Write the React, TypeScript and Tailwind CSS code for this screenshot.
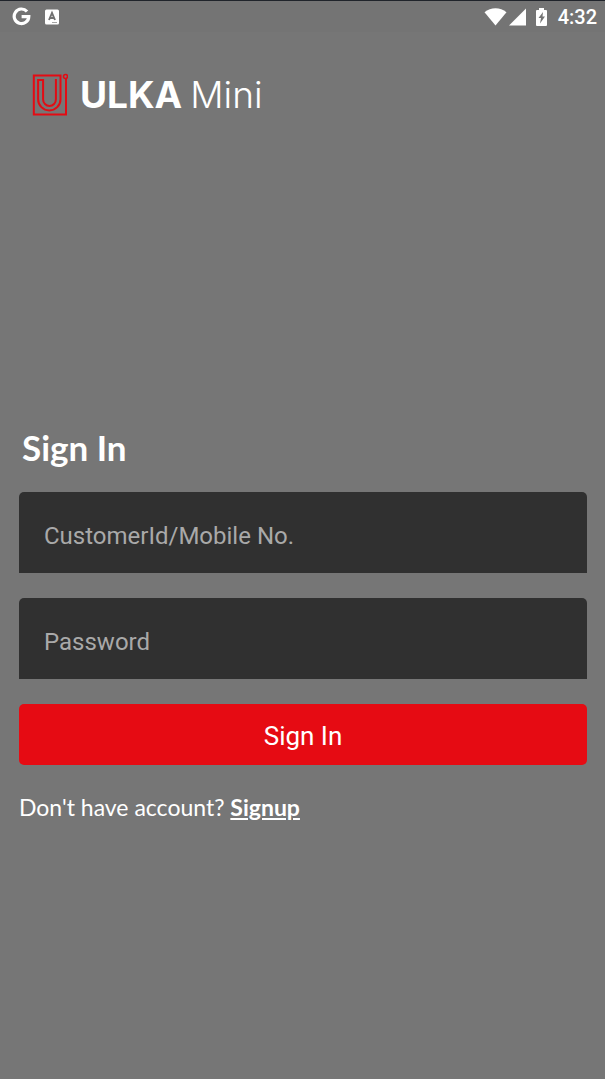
import type { ReactNode } from "react";

function StatusBar() {
  return (
    <div className="flex h-8 items-center justify-between border-t border-[#20242b] bg-[#747474] pr-2 pl-3">
      <div className="flex items-center gap-3">
        <svg aria-hidden="true" className="size-5" viewBox="0 0 20 20" fill="none" stroke="#fff" strokeWidth="3.2">
          <path d="M15 4.500A7.300 7.300 0 1 0 16.800 9.600H9.600" />
        </svg>
        <svg aria-hidden="true" className="size-4" viewBox="0 0 16 16">
          <rect x="1" y="0.5" width="14" height="15" rx="1.5" fill="#fff" />
          <path d="M5 11 8 4l3 7M6 9h4" fill="none" stroke="#717171" strokeWidth="1.9" />
          <path d="M8 13.5h5" stroke="#a5a5a5" strokeWidth="1" />
        </svg>
      </div>
      <div className="flex items-center">
        <svg aria-hidden="true" className="mr-2 h-5 w-[66px]" viewBox="0 0 66 20" fill="#fff">
          <path d="M11.500 18.500.500 5.200C6.800 0 16.200 0 22.500 5.200Z" />
          <path d="M25 18.500 42 1.500V18.500Z" />
          <path fillRule="evenodd" d="M53 3h2V1h5v2h2a1 1 0 0 1 1 1v14a1 1 0 0 1-1 1H53a1 1 0 0 1-1-1V4a1 1 0 0 1 1-1Zm6 2L54.500 11H57l-1 5.500L61 9.500h-2.500Z" />
        </svg>
        <span className="font-['Roboto',sans-serif] text-xl leading-none font-medium">4:32</span>
      </div>
    </div>
  );
}

function Logo() {
  return (
    <div className="flex items-start">
      <svg aria-hidden="true" className="mr-3 h-11 w-9" viewBox="0 0 36 44" fill="none" stroke="#e40b13" strokeWidth="2">
        <path d="M34 6.500V42.500H1.800V3.500H28.500V27.200a11.200 11.200 0 0 1-22.400 0V8h5V27.500a6.400 6.400 0 0 0 12.800 0V7" />
        <circle cx="33.500" cy="4.500" r="2" strokeWidth="1.600" />
      </svg>
      <div className="flex gap-2 pt-px font-['Inter',sans-serif] text-[37px] leading-11">
        <span className="font-bold">ULKA</span>
        <span className="font-light">Mini</span>
      </div>
    </div>
  );
}

function Field({ id, type, children }: { id: string; type: string; children: string }) {
  return (
    <div className="grid rounded-t-[5px] bg-[#303030] font-['Roboto',sans-serif] text-2xl *:col-start-1 *:row-start-1">
      <input
        id={id}
        name={id}
        type={type}
        placeholder=" "
        className="peer h-[81px] w-full bg-transparent px-[25px] pt-1.5 outline-none"
      />
      <label
        htmlFor={id}
        className="pointer-events-none invisible self-center px-[25px] pt-1.5 text-[#a9a9a9] peer-placeholder-shown:visible"
      >
        {children}
      </label>
    </div>
  );
}

function Page({ children }: { children: ReactNode }) {
  return <div className="flex min-h-screen flex-col bg-[#767676] font-['Lato',sans-serif] text-white">{children}</div>;
}

export default function App() {
  return (
    <Page>
      <StatusBar />
      <header className="px-8 pt-10 pb-14">
        <Logo />
      </header>
      <main className="flex flex-1 flex-col justify-center pr-[18px] pl-[19px]">
        <h1 className="mb-[25px] px-[3px] text-[35px] leading-10 font-bold">Sign In</h1>
        <form className="flex flex-col gap-[25px]" onSubmit={(event) => event.preventDefault()}>
          <Field id="customer" type="text">CustomerId/Mobile No.</Field>
          <Field id="password" type="password">Password</Field>
          <button type="submit" className="h-[61px] w-full rounded-[5px] bg-[#e60b13] pt-1 font-['Roboto',sans-serif] text-[26px]">
            Sign In
          </button>
        </form>
        <p className="mt-6 text-[23px] leading-9">
          Don't have account? <a href="#signup" className="font-bold underline">Signup</a>
        </p>
      </main>
    </Page>
  );
}
